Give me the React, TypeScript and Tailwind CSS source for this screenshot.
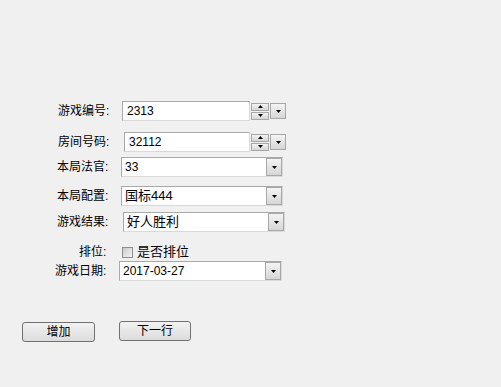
const FONT = "font-['Liberation_Sans','Noto_Sans_CJK_SC',sans-serif]";

function Arrow({ up = false }: { up?: boolean }) {
  return (
    <svg width="5" height="3" viewBox="0 0 5 3" className="block">
      {up ? <path d="M0 3 L2.5 0 L5 3 Z" fill="#000" /> : <path d="M0 0 L5 0 L2.5 3 Z" fill="#000" />}
    </svg>
  );
}

function DropButton({ className = "" }: { className?: string }) {
  return (
    <div
      className={`flex items-center justify-center border border-[#a7a7a7] bg-gradient-to-b from-[#f4f4f4] to-[#d6d6d6] ${className}`}
    >
      <Arrow />
    </div>
  );
}

function Spinner() {
  return (
    <div className="ml-px flex flex-col gap-px">
      <div className="flex h-[8px] w-[18px] items-center justify-center border border-[#a7a7a7] bg-gradient-to-b from-[#f4f4f4] to-[#d6d6d6]">
        <Arrow up />
      </div>
      <div className="flex h-[8px] w-[18px] items-center justify-center border border-[#a7a7a7] bg-gradient-to-b from-[#f4f4f4] to-[#d6d6d6]">
        <Arrow />
      </div>
    </div>
  );
}

function Combo({ value, cjk = false, className = "" }: { value: string; cjk?: boolean; className?: string }) {
  return (
    <div className={`flex h-5 items-center border border-[#a9a9a9] border-b-[#d9d9d9] border-r-[#d9d9d9] bg-white ${className}`}>
      <span className={`flex-1 pl-[3px] text-black ${cjk ? "text-[13px]" : "text-[12px]"}`}>{value}</span>
      <DropButton className="h-[18px] w-4" />
    </div>
  );
}

export default function App() {
  return (
    <div className={`relative h-[387px] w-[501px] overflow-hidden bg-[#f0f0f0] ${FONT} text-[12px] text-black`}>
      <div className="flex flex-col pt-[101px]">
        {/* 游戏编号 */}
        <div className="flex h-5 items-center">
          <div className="w-[122px] pl-[58px]">游戏编号:</div>
          <div className="flex h-5 w-[128px] items-center border border-[#a9a9a9] border-b-[#d9d9d9] border-r-[#d9d9d9] bg-white pl-[4px]">
            2313
          </div>
          <Spinner />
          <DropButton className="ml-px h-4 w-4" />
        </div>

        {/* 房间号码 */}
        <div className="mt-[11px] flex h-5 items-center">
          <div className="w-[124px] pl-[58px]">房间号码:</div>
          <div className="flex h-5 w-[126px] items-center border border-[#a9a9a9] border-b-[#d9d9d9] border-r-[#d9d9d9] bg-white pl-[4px]">
            32112
          </div>
          <Spinner />
          <DropButton className="ml-px h-4 w-4" />
        </div>

        {/* 本局法官 */}
        <div className="mt-[5px] flex h-5 items-center">
          <div className="w-[121px] pl-[57px]">本局法官:</div>
          <Combo value="33" className="w-[162px]" />
        </div>

        {/* 本局配置 */}
        <div className="mt-[9px] flex h-5 items-center">
          <div className="w-[121px] pl-[57px]">本局配置:</div>
          <Combo value="国标444" cjk className="w-[162px]" />
        </div>

        {/* 游戏结果 */}
        <div className="mt-[6px] flex h-5 items-center">
          <div className="w-[123px] pl-[57px]">游戏结果:</div>
          <Combo value="好人胜利" cjk className="w-[162px]" />
        </div>

        {/* 排位 */}
        <div className="mt-[13px] flex h-[14px] items-center">
          <div className="w-[122px] pl-[79px]">排位:</div>
          <div className="h-[11px] w-[11px] border border-[#8e8f8f] bg-gradient-to-br from-[#cbcbcb] to-[#f4f4f4]" />
          <span className="ml-[4px] text-[13px]">是否排位</span>
        </div>

        {/* 游戏日期 */}
        <div className="mt-[2px] flex h-5 items-center">
          <div className="w-[119px] pl-[55px]">游戏日期:</div>
          <Combo value="2017-03-27" className="w-[163px]" />
        </div>

        {/* Buttons */}
        <div className="mt-[40px] flex items-start">
          <button className="ml-[22px] mt-px flex h-5 w-[73px] items-center justify-center rounded-[3px] border border-[#707070] bg-gradient-to-b from-[#f2f2f2] to-[#dcdcdc] text-[12px]">
            增加
          </button>
          <button className="ml-[24px] flex h-5 w-[72px] items-center justify-center rounded-[3px] border border-[#707070] bg-gradient-to-b from-[#f2f2f2] to-[#dcdcdc] text-[12px]">
            下一行
          </button>
        </div>
      </div>
    </div>
  );
}
